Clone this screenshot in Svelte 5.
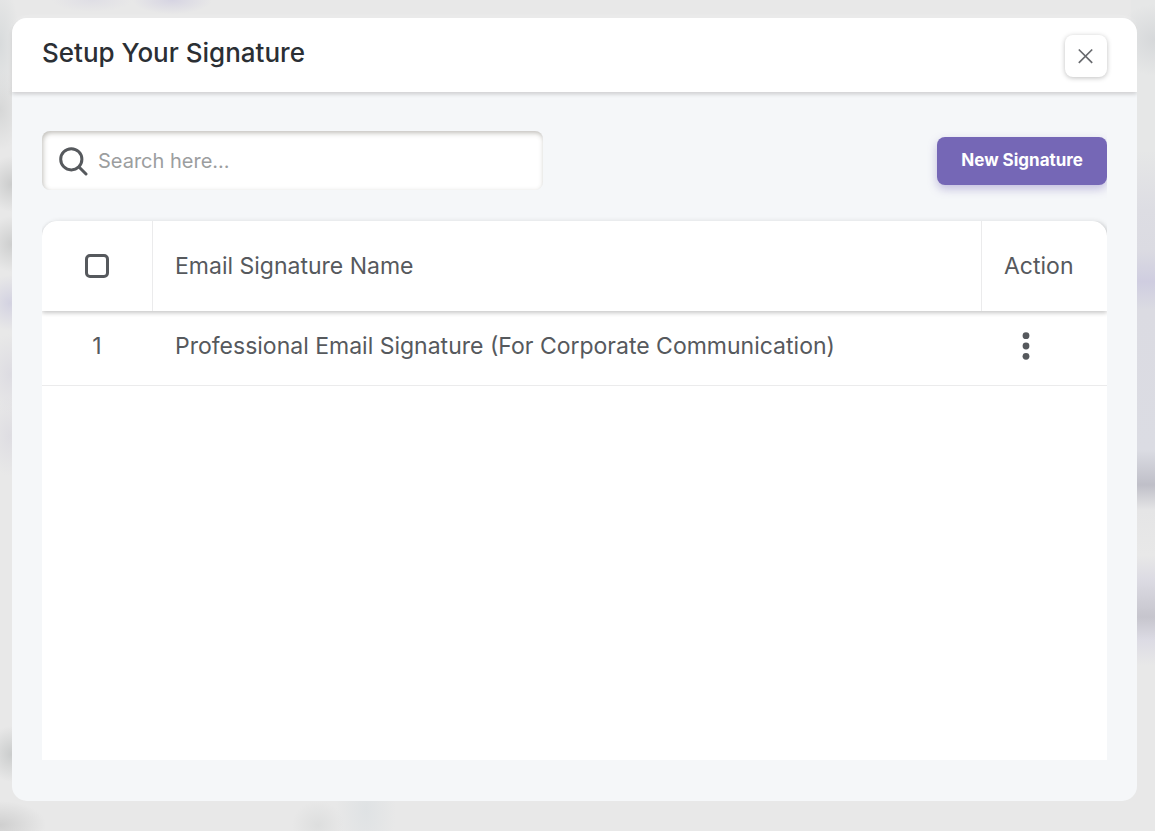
<script>
  let query = $state('');
  let selectAll = $state(false);
  const signatures = [
    { id: 1, name: 'Professional Email Signature (For Corporate Communication)' }
  ];
  const rows = $derived(
    signatures.filter((s) => s.name.toLowerCase().includes(query.toLowerCase()))
  );
</script>

<div class="backdrop">
  <div class="dialog" role="dialog" aria-labelledby="dialog-title">
    <header>
      <h1 id="dialog-title">Setup Your Signature</h1>
      <button class="close" type="button" aria-label="Close">
        <svg width="16" height="16" viewBox="0 0 16 16" aria-hidden="true">
          <path d="M.8 1.5 14.2 14.9M14.2 1.5.8 14.9" />
        </svg>
      </button>
    </header>

    <main>
      <div class="toolbar">
        <label class="search">
          <svg width="30" height="30" viewBox="0 0 30 30" aria-hidden="true">
            <circle cx="12.3" cy="13.3" r="10.6" />
            <path d="m20 21 7 7" />
          </svg>
          <input type="text" placeholder="Search here..." aria-label="Search signatures" bind:value={query} />
        </label>
        <button class="new" type="button">New Signature</button>
      </div>

      <div class="panel">
        <table>
          <thead>
            <tr>
              <th class="select"><input type="checkbox" aria-label="Select all" bind:checked={selectAll} /></th>
              <th>Email Signature Name</th>
              <th class="action">Action</th>
            </tr>
          </thead>
          <tbody>
            {#each rows as row (row.id)}
              <tr>
                <td class="select">{row.id}</td>
                <td>{row.name}</td>
                <td class="action">
                  <button class="more" type="button" aria-label="More actions">
                    <svg width="8" height="28" viewBox="0 0 8 28" aria-hidden="true">
                      <circle cx="4" cy="3.7" r="3.4" />
                      <circle cx="4" cy="14" r="3.4" />
                      <circle cx="4" cy="24.3" r="3.4" />
                    </svg>
                  </button>
                </td>
              </tr>
            {/each}
          </tbody>
        </table>
      </div>
    </main>
  </div>
</div>

<style>
  :global(body) {
    margin: 0;
  }

  .backdrop,
  .backdrop * {
    box-sizing: border-box;
  }

  .backdrop {
    display: flex;
    min-height: 100vh;
    padding: 18px 18px 30px 12px;
    color: #56595d;
    font-family: Inter, "Liberation Sans", sans-serif;
    background:
      radial-gradient(ellipse 40px 14px at 172px 0, #d6d4e2, transparent),
      radial-gradient(ellipse 40px 12px at 92px 0, #dfdee5, transparent),
      radial-gradient(ellipse 20px 60px at 0 44px, #d8dbdc, transparent),
      radial-gradient(ellipse 24px 40px at 0 110px, #d6d7d7, transparent),
      radial-gradient(ellipse 26px 28px at 12px 184px, #cbcccc, transparent),
      radial-gradient(ellipse 26px 28px at 12px 244px, #cdcece, transparent),
      radial-gradient(ellipse 26px 28px at 10px 303px, #d3d2e1, transparent),
      radial-gradient(ellipse 24px 40px at 10px 374px, #dddce2, transparent),
      radial-gradient(ellipse 24px 40px at 10px 436px, #dedde2, transparent),
      radial-gradient(ellipse 26px 28px at 12px 754px, #cacccc, transparent),
      radial-gradient(ellipse 46px 24px at 0 825px, #cfcfcf, transparent),
      radial-gradient(ellipse 26px 24px at 318px 825px, #dddede, transparent),
      radial-gradient(ellipse 30px 60px at 366px 810px, #dfe2e4, transparent),
      radial-gradient(ellipse 40px 36px at 1155px 40px, #d6d8da, transparent),
      linear-gradient(#e6e7e7 150px, #dddde3 210px, #dbdbe2 250px, #cfcde0 282px, #dbdbe2 310px, #dbdce3 450px, #bfbfc8 485px, #e5e5e6 510px, #e8e8e8 555px, #dcdbe3 580px, #c6c5cd 617px, #dcdbe4 640px, #e8e8e8 665px) right / 24px 100% no-repeat,
      #e8e8e8;
  }

  .dialog {
    display: flex;
    flex: 1;
    flex-direction: column;
    min-width: 0;
    border-radius: 15px;
    background: #f5f7f9;
  }

  header {
    display: flex;
    align-items: center;
    justify-content: space-between;
    padding: 16px 30px 14px;
    border-radius: 15px 15px 0 0;
    background: #fff;
    box-shadow: 0 2px 4px rgb(0 0 0 / 18%), 0 0 4px rgb(255 255 255 / 80%);
    clip-path: inset(-4px 0 -6px -4px);
  }

  h1 {
    margin: 0 0 6px;
    color: #2b2f34;
    font-size: 26px;
    font-weight: 500;
    line-height: 32px;
  }

  button {
    padding: 0;
    border: 0;
    font-family: inherit;
    cursor: pointer;
  }

  .close {
    display: grid;
    place-items: center;
    width: 42px;
    height: 42px;
    margin: 1px 0;
    border-radius: 8px;
    background: #fff;
    box-shadow: 0 1px 5px rgb(0 0 0 / 25%);
  }

  .close path {
    fill: none;
    stroke: #686a6e;
    stroke-width: 1.7;
  }

  main {
    display: flex;
    flex: 1;
    flex-direction: column;
    gap: 31px;
    padding: 39px 30px 41px;
  }

  .toolbar {
    display: flex;
    align-items: center;
    justify-content: space-between;
    gap: 24px;
  }

  .search {
    display: flex;
    flex: 0 1 501px;
    align-items: center;
    gap: 9px;
    height: 59px;
    padding: 0 17px;
    border-radius: 8px;
    background: #fff;
    box-shadow: inset 1px 2px 5px rgb(70 65 50 / 34%);
  }

  .search svg {
    flex: none;
    fill: none;
    stroke: #56595d;
    stroke-width: 3;
    stroke-linecap: round;
  }

  .search input {
    flex: 1;
    min-width: 0;
    padding: 0;
    border: 0;
    outline: 0;
    color: inherit;
    font-family: inherit;
    font-size: 20px;
    line-height: 28px;
    background: none;
  }

  .search input::placeholder {
    color: #9c9e9f;
  }

  .new {
    height: 48px;
    padding: 0 24px 2px;
    border-radius: 8px;
    color: #fff;
    font-size: 17px;
    font-weight: 700;
    background: #7567b6;
    box-shadow: 0 4px 10px rgb(117 103 182 / 40%);
    clip-path: inset(-10px 0 -16px -12px);
  }

  .panel {
    flex: 1;
    border-radius: 15px 15px 0 0;
    background: #fff;
    box-shadow: 2px 0 5px rgb(0 0 0 / 10%);
    clip-path: inset(-4px 0 0 0);
  }

  table {
    width: 100%;
    border-collapse: separate;
    border-spacing: 0;
    table-layout: fixed;
    font-size: 23px;
    line-height: 30px;
  }

  thead {
    box-shadow: 0 2px 4px rgb(0 0 0 / 22%);
    clip-path: inset(0 0 -8px 0);
    border-radius: 15px 15px 0 0;
  }

  th,
  td {
    padding: 0 22px;
    font-weight: 400;
    text-align: left;
  }

  th {
    height: 90px;
  }

  td {
    height: 75px;
    padding-bottom: 4px;
    border-bottom: 1px solid #ebebec;
  }

  th + th {
    border-left: 1px solid #ebebec;
  }

  td + td {
    padding-left: 23px;
  }

  .select {
    width: 110px;
    text-align: center;
  }

  .action {
    width: 126px;
  }

  th input {
    display: block;
    width: 24px;
    height: 24px;
    margin: 0 auto;
    border: 3px solid #56595d;
    border-radius: 5px;
    appearance: none;
  }

  th input:checked {
    background: #7567b6;
  }

  .more {
    display: grid;
    place-items: center;
    width: 44px;
    height: 42px;
    background: none;
  }

  .more svg {
    fill: #56595d;
  }
</style>
